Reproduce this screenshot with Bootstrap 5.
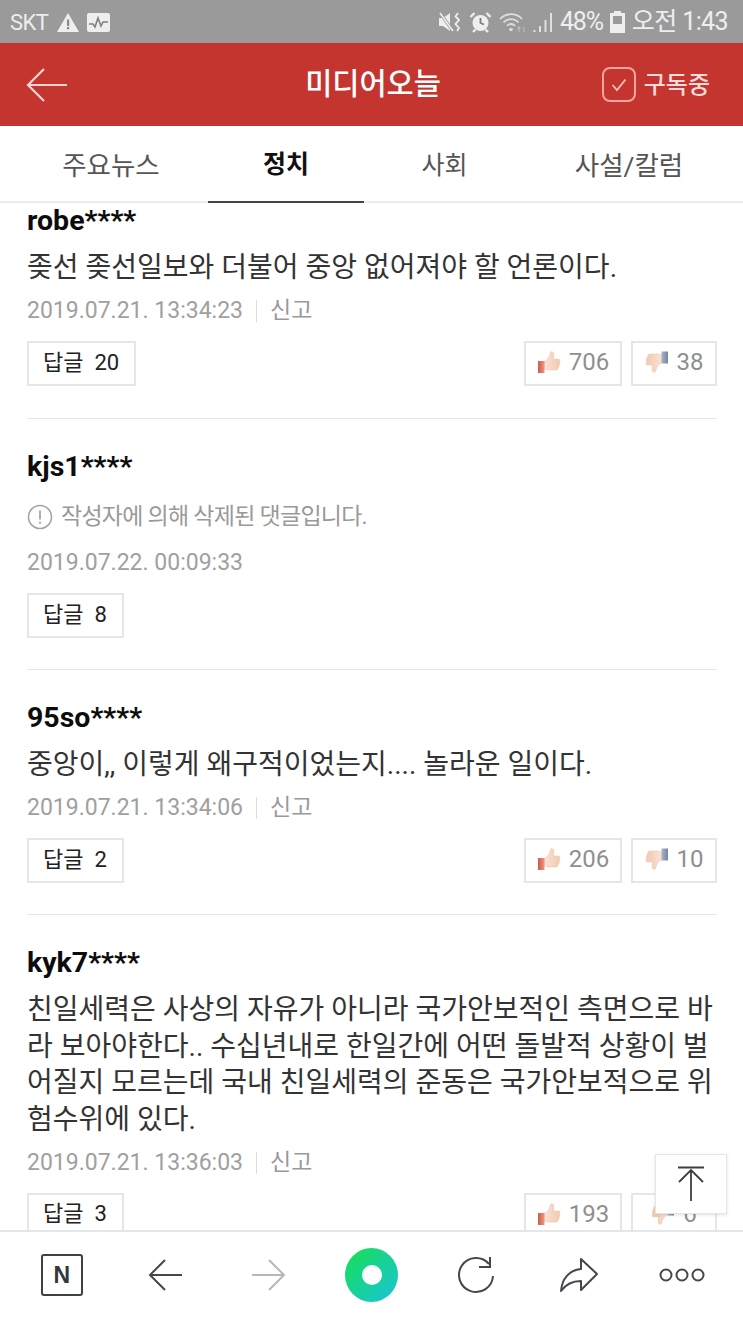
<!DOCTYPE html>
<html lang="ko">
<head>
    <meta charset="UTF-8">
    <meta name="viewport" content="width=device-width, initial-scale=1.0">
    <title>미디어오늘</title>
    <link href="https://cdn.jsdelivr.net/npm/bootstrap@5.3.0/dist/css/bootstrap.min.css" rel="stylesheet">
    <style>
        html, body { height: 1321px; overflow: hidden; }
        body { font-family: Roboto, "Noto Sans CJK KR", sans-serif; background: #fff; color: #111; }
        .screen { height: 1321px; position: relative; }
        .status-bar { height: 43px; background: #9a9a9a; color: #eee; font-size: 25px; padding: 1px 15px 0 10px; flex: none; }
        .status-carrier { font-size: 22px; letter-spacing: -.5px; }
        .status-pct { letter-spacing: -1.2px; }
        .status-time { letter-spacing: -.6px; }
        .status-left { gap: 8px; }
        .status-right { gap: 7px; }
        .app-bar { height: 83px; background: #c4352f; color: #fff; padding: 0 33px 0 26px; flex: none; display: grid; grid-template-columns: 1fr auto 1fr; }
        .app-title { font-size: 29.5px; font-weight: 500; margin: 0 0 0 10px; line-height: 1; }
        .sub-check { width: 34px; height: 35px; border: 2px solid #f3a5a0; border-radius: 8px; }
        .sub-label { font-size: 24px; font-weight: 500; color: #fbdcda; }
        .tab-bar { height: 77px; flex: none; border-bottom: 2px solid #ececec; flex-wrap: nowrap; }
        .tab-item { font-size: 26.5px; color: #555; height: 77px; padding-top: 3px; display: flex; align-items: center; justify-content: center; }
        .tab-a { width: 208px; padding-left: 14px; }
        .tab-b { width: 156px; color: #111; font-weight: 700; font-size: 25px; border-bottom: 2px solid #444; }
        .tab-c { width: 161px; font-size: 25px; }
        .tab-d { width: 218px; padding-right: 10px; }
        .feed { flex: 1 1 auto; overflow: hidden; padding: 0 26px 0 27px; min-height: 0; }
        .cmt { padding: 33px 0 31px; border-bottom: 1px solid #e6e6e6; }
        .cmt-first { padding: 3px 0 32px; }
        .cmt-name { font-size: 28.5px; font-weight: 700; line-height: 30px; color: #0c0c0c; }
        .cmt-text { font-size: 28px; line-height: 36.5px; color: #333; margin: 14px 0 0; word-break: break-all; }
        .cmt-gone { font-size: 23px; line-height: 32px; color: #999; margin: 19px 0 0; letter-spacing: -.75px; }
        .cmt-meta { font-size: 23px; line-height: 24px; color: #a0a0a0; margin-top: 12.500px; }
        .cmt-gone + .cmt-meta { margin-top: 18px; }
        .cmt-sep { width: 1px; height: 22px; background: #ddd; margin: 0 13px; }
        .cmt-report { color: #999; }
        .cmt-actions { margin-top: 18px; height: 45px; }
        .box-btn { height: 45px; border: 2px solid #e6e6e6; border-radius: 0; background: #fff; padding: 0 0 3px; font-size: 22px; }
        .box-reply { color: #222; padding: 0 15px 3px 14px; }
        .box-vote { color: #8f8f8f; font-size: 24px; }
        .vote-up { width: 98px; }
        .vote-down { width: 86px; }
        .vote-pair { gap: 9px; }
        .top-jump { position: absolute; left: 655px; top: 1154px; width: 72px; height: 60px; background: #fff; border: 1px solid #e6e6e6; box-shadow: 0 1px 3px rgba(0,0,0,.12); }
        .tool-bar { height: 91px; flex: none; border-top: 2px solid #e4e7ea; background: #fff; padding: 0 9px 3px 10px; position: relative; display: grid; grid-template-columns: repeat(7, 1fr); justify-items: center; align-items: center; }
        .tool-n { width: 42px; height: 42px; border: 2px solid #3c4146; border-radius: 3px; font-size: 23px; font-weight: 700; color: #33383d; font-family: "Liberation Sans", sans-serif; }
        .green-dot { width: 53px; height: 54px; border-radius: 50%; background: linear-gradient(135deg, #17e04e, #19c3dc); }
        .green-dot span { width: 20px; height: 20px; border-radius: 50%; background: #fff; display: block; }
    </style>
</head>
<body>
    <svg width="0" height="0" class="position-absolute">
        <defs>
            <linearGradient id="hand-up" x1="0" y1="0" x2="1" y2="0"><stop offset="0" stop-color="#f9e3d6"/><stop offset="1" stop-color="#f2c9b0"/></linearGradient>
            <linearGradient id="hand-down" x1="0" y1="0" x2="1" y2="0"><stop offset="0" stop-color="#f2c9b0"/><stop offset="1" stop-color="#f9e3d6"/></linearGradient>
            <linearGradient id="cuff-up" x1="0" y1="0" x2="1" y2="0"><stop offset="0" stop-color="#cf5a46"/><stop offset="1" stop-color="#e89a86"/></linearGradient>
            <linearGradient id="cuff-down" x1="0" y1="0" x2="1" y2="0"><stop offset="0" stop-color="#a9b6c6"/><stop offset="1" stop-color="#6f86a3"/></linearGradient>
        </defs>
        <symbol id="thumb" viewBox="0 0 24 24">
            <path d="M7 11.500c3-1 5.500-4 6.500-9 .3-1.400 3.500-1 3.500 1.800 0 1.500-.4 3-.9 4.700h5c1.900 0 2.300 2 1.100 3 .9.900.7 2.400-.3 2.900.6 1.100.2 2.300-.9 2.700.3 1.300-.6 2.400-1.900 2.400H12c-2 0-3.500-.7-5-1.300z" fill="url(#hand-up)" stroke="#ebbda2" stroke-width=".5"/>
            <rect x="1" y="11" width="6.500" height="12" fill="url(#cuff-up)"/>
        </symbol>
        <symbol id="thumb-down" viewBox="0 0 24 24">
            <path d="M17 12.500c-3 1-5.500 4-6.500 9-.3 1.400-3.500 1-3.500-1.800 0-1.500.4-3 .9-4.700h-5c-1.900 0-2.300-2-1.100-3-.9-.9-.7-2.400.3-2.900-.6-1.100-.2-2.300.9-2.700-.3-1.300.6-2.400 1.900-2.400H12c2 0 3.500.7 5 1.300z" fill="url(#hand-down)" stroke="#ebbda2" stroke-width=".5"/>
            <rect x="16.500" y="1.500" width="6.500" height="12" fill="url(#cuff-down)"/>
        </symbol>
    </svg>

    <div class="screen d-flex flex-column">
        <div class="status-bar d-flex align-items-center justify-content-between">
            <div class="status-left d-flex align-items-center">
                <span class="status-carrier">SKT</span>
                <svg width="22" height="19" viewBox="0 0 22 19"><path d="M11 0 22 19H0z" fill="#eee"/><path d="M10 6.500h2.200v6.500H10zM10 14h2.200v2.300H10z" fill="#8a8a8a"/></svg>
                <svg width="23" height="19" viewBox="0 0 23 19"><rect width="23" height="19" rx="2" fill="#eee"/><path d="M2 11h4l2 3 3-9 3 8 2-4h5" fill="none" stroke="#808080" stroke-width="1.600"/></svg>
            </div>
            <div class="status-right d-flex align-items-center">
                <svg width="23" height="20" viewBox="0 0 23 20"><path d="M0 6h4l7-5v18l-7-5H0z" fill="#eee"/><path d="M1 1l13 18" stroke="#9a9a9a" stroke-width="3"/><path d="M1 1l13 18" stroke="#eee" stroke-width="1.600"/><path d="M19 1l-2.500 3.500L20 8l-3.500 4 3.500 4-2 3" fill="none" stroke="#eee" stroke-width="1.800"/></svg>
                <svg width="23" height="22" viewBox="0 0 23 22"><circle cx="11.500" cy="12" r="8" fill="#eee"/><path d="M11.500 7v5l3.500 1.500" fill="none" stroke="#7d7d7d" stroke-width="1.800"/><path d="M1.500 6l4-4M21.500 6l-4-4M4 21l2.500-2.500M19 21l-2.500-2.500" stroke="#eee" stroke-width="2.400"/></svg>
                <svg width="27" height="20" viewBox="0 0 27 20"><path d="M1 7a15 15 0 0 1 22 0M4.500 10.500a10 10 0 0 1 15 0M8 14a5 5 0 0 1 8 0" fill="none" stroke="#dcdcdc" stroke-width="1.800"/><circle cx="12" cy="17.500" r="1.800" fill="#dcdcdc"/><path d="M20 20v-5m-1.500 1.500L20 15l1.500 1.500M25 15v5" fill="none" stroke="#bdbdbd" stroke-width="1.100"/></svg>
                <svg width="20" height="20" viewBox="0 0 20 20"><path d="M1.500 20v-2M7 20v-6M12.500 20V8M18 20V1" stroke="#e0e0e0" stroke-width="2"/></svg>
                <span class="status-pct">48%</span>
                <svg width="15" height="22" viewBox="0 0 15 22"><path d="M4 0h7v2h4v20H0V2h4z" fill="#eee"/><rect x="3" y="5" width="9" height="8" fill="#9a9a9a"/></svg>
                <span class="status-time">오전 1:43</span>
            </div>
        </div>

        <div class="app-bar align-items-center">
            <div>
                <svg width="42" height="36" viewBox="0 0 42 36"><path d="M41 18H2M18 2 2 18l16 16" fill="none" stroke="#f6d4d2" stroke-width="2.200"/></svg>
            </div>
            <h1 class="app-title">미디어오늘</h1>
            <div class="d-flex align-items-center justify-content-end gap-2">
                <span class="sub-check d-flex align-items-center justify-content-center">
                    <svg width="16" height="14" viewBox="0 0 16 14"><path d="M1.500 7l4.500 5L14.500 1.500" fill="none" stroke="#f6c0bc" stroke-width="1.800"/></svg>
                </span>
                <span class="sub-label">구독중</span>
            </div>
        </div>

        <div class="nav tab-bar">
            <div class="tab-item tab-a">주요뉴스</div>
            <div class="tab-item tab-b">정치</div>
            <div class="tab-item tab-c">사회</div>
            <div class="tab-item tab-d">사설/칼럼</div>
        </div>

        <div class="feed" id="feed"></div>

        <div class="tool-bar">
            <span class="tool-n d-flex align-items-center justify-content-center">N</span>
            <svg width="34" height="34" viewBox="0 0 34 34"><path d="M34 17H2M17 2 2 17l15 15" fill="none" stroke="#43484d" stroke-width="2"/></svg>
            <svg width="34" height="34" viewBox="0 0 34 34"><path d="M0 17h32M17 2l15 15-15 15" fill="none" stroke="#b5b8bb" stroke-width="2"/></svg>
            <span class="green-dot d-flex align-items-center justify-content-center"><span></span></span>
            <svg width="38" height="38" viewBox="0 0 38 38"><path d="M33 8a17 17 0 1 0 4 12" fill="none" stroke="#43484d" stroke-width="2"/><path d="M34 1v10H23" fill="none" stroke="#43484d" stroke-width="2"/></svg>
            <svg width="40" height="36" viewBox="0 0 40 36"><path d="M22 2l16 15-16 16v-9C13 24 7 27 2 34c1-12 8-21 20-22z" fill="none" stroke="#43484d" stroke-width="2" stroke-linejoin="round"/></svg>
            <svg width="46" height="14" viewBox="0 0 46 14"><g fill="none" stroke="#43484d" stroke-width="2"><circle cx="7" cy="7" r="5.500"/><circle cx="23" cy="7" r="5.500"/><circle cx="39" cy="7" r="5.500"/></g></svg>
        </div>

        <div class="top-jump d-flex align-items-center justify-content-center">
            <svg width="28" height="36" viewBox="0 0 28 36"><path d="M1 1.500h26M14 35V4M2 16 14 4l12 12" fill="none" stroke="#3f3f3f" stroke-width="1.800"/></svg>
        </div>
    </div>

    <script src="https://cdn.jsdelivr.net/npm/bootstrap@5.3.0/dist/js/bootstrap.bundle.min.js"></script>
    <script>
        const comments = [
            { name: "robe****", text: "좆선 좆선일보와 더불어 중앙 없어져야 할 언론이다.", date: "2019.07.21. 13:34:23", replies: 20, up: 706, down: 38 },
            { name: "kjs1****", gone: true, date: "2019.07.22. 00:09:33", replies: 8 },
            { name: "95so****", text: "중앙이,, 이렇게 왜구적이었는지.... 놀라운 일이다.", date: "2019.07.21. 13:34:06", replies: 2, up: 206, down: 10 },
            { name: "kyk7****", text: "친일세력은 사상의 자유가 아니라 국가안보적인 측면으로 바라 보아야한다.. 수십년내로 한일간에 어떤 돌발적 상황이 벌어질지 모르는데 국내 친일세력의 준동은 국가안보적으로 위험수위에 있다.", date: "2019.07.21. 13:36:03", replies: 3, up: 193, down: 6 }
        ];

        const warnIcon = `<svg class="me-2" width="26" height="26" viewBox="0 0 26 26" style="vertical-align:-6px"><circle cx="13" cy="13" r="11.500" fill="none" stroke="#a5a5a5" stroke-width="1.600"/><path d="M13 6.500v9M13 17.500v2.200" stroke="#a5a5a5" stroke-width="1.800"/></svg>`;

        document.getElementById("feed").innerHTML = comments.map((c, i) => `
            <div class="cmt ${i === 0 ? "cmt-first" : ""}">
                <div class="cmt-name">${c.name}</div>
                ${c.gone ? `<p class="cmt-gone">${warnIcon}작성자에 의해 삭제된 댓글입니다.</p>` : `<p class="cmt-text">${c.text}</p>`}
                <div class="cmt-meta d-flex align-items-center">
                    <span>${c.date}</span>
                    ${c.gone ? "" : `<span class="cmt-sep"></span><span class="cmt-report">신고</span>`}
                </div>
                <div class="cmt-actions d-flex justify-content-between">
                    <button class="btn box-btn box-reply">답글&nbsp; ${c.replies}</button>
                    ${c.gone ? "" : `<div class="vote-pair d-flex">
                        <button class="btn box-btn box-vote vote-up d-flex align-items-center justify-content-center gap-2"><svg width="24" height="24"><use href="#thumb"/></svg>${c.up}</button>
                        <button class="btn box-btn box-vote vote-down d-flex align-items-center justify-content-center gap-2"><svg width="24" height="24"><use href="#thumb-down"/></svg>${c.down}</button>
                    </div>`}
                </div>
            </div>`).join("");
    </script>
</body>
</html>
